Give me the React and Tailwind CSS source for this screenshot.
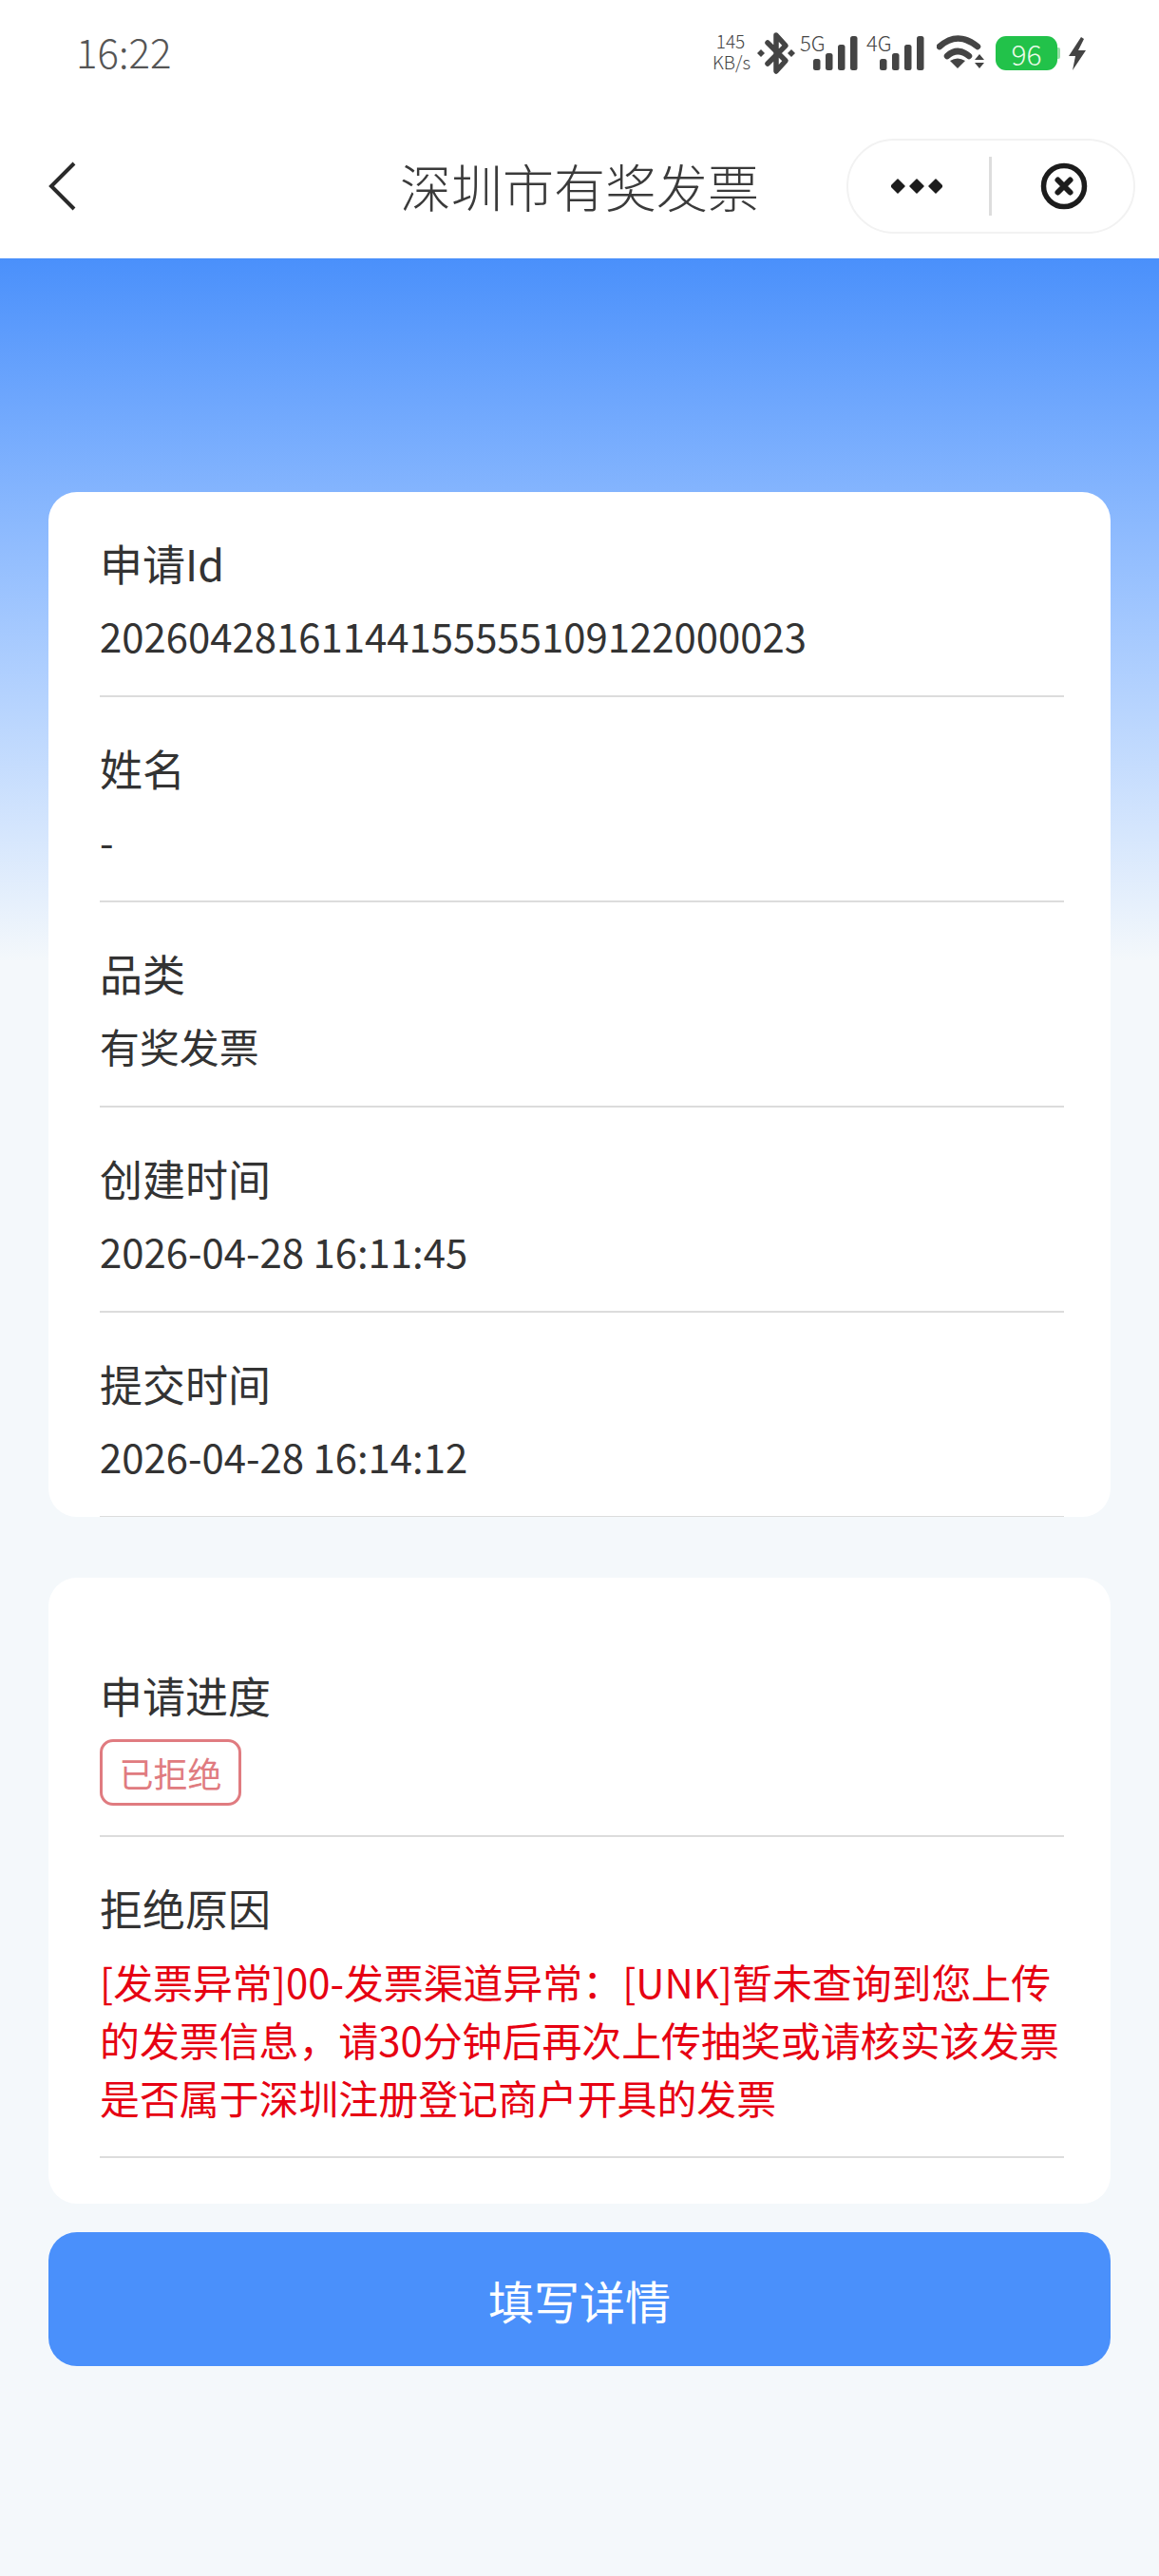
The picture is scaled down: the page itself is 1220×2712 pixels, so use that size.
import React from "react";

const font = { fontFamily: '"Noto Sans CJK SC", "Noto Sans", sans-serif' };

function Signal({ label }) {
  return (
    <div className="relative h-[38px] w-[47px]">
      <span className="absolute -left-[14px] -top-[2px] text-[22px] leading-[20px] font-light text-[#444]">{label}</span>
      <svg width="47" height="36" viewBox="0 0 47 36" className="absolute left-0 top-[2px]" fill="#444">
        <rect x="0" y="24" width="7.5" height="12" rx="2.5" />
        <rect x="13" y="18" width="7.5" height="18" rx="2.5" />
        <rect x="26" y="9" width="7.5" height="27" rx="2.5" />
        <rect x="39" y="0" width="7.5" height="36" rx="2.5" />
      </svg>
    </div>
  );
}

function Row({ label, children }) {
  return (
    <div className="border-b-2 border-[#dcdcdc] pt-[42px] pb-[30px]">
      <div className="text-[45px] leading-[66px] text-[#333]">{label}</div>
      {children}
    </div>
  );
}

function Value({ children }) {
  return <div className="mt-[10px] text-[41.9px] leading-[66px] text-[#333]">{children}</div>;
}

export default function App() {
  return (
    <div className="min-h-[2712px] w-[1220px] bg-white" style={font}>
      {/* status bar */}
      <div className="flex h-[130px] items-start justify-between pl-[80px] pr-[77px] pt-[31px]">
        <span className="-mt-[2px] text-[42px] leading-[50px] font-light text-[#555]">16:22</span>
        <div className="flex items-start pt-[5px]">
          <div className="-mt-[4px] w-[38px] text-center text-[19px] leading-[22px] font-light text-[#444]">
            <div>145</div>
            <div>KB/s</div>
          </div>
          <svg width="40" height="46" viewBox="0 0 40 46" className="-mt-[3px] ml-[9px]">
            <path d="M11 12 L30 31 L20 42 V4 L30 15 L11 34" fill="none" stroke="#444" strokeWidth="5.5" strokeLinecap="round" strokeLinejoin="round" />
            <path d="M4 19 L8 23 L4 27 L0 23 Z M36 19 L40 23 L36 27 L32 23 Z" fill="#444" />
          </svg>
          <div className="ml-[19px]"><Signal label="5G" /></div>
          <div className="ml-[23px]"><Signal label="4G" /></div>
          <svg width="50" height="37" viewBox="0 0 50 37" className="ml-[13px]">
            <path d="M3 13 Q22 -4 43 13" fill="none" stroke="#444" strokeWidth="6.5" strokeLinecap="round" />
            <path d="M11 23 Q22 13 34 23" fill="none" stroke="#444" strokeWidth="6.5" strokeLinecap="round" />
            <path d="M14 28 Q22 23 30 28 L22 36 Z" fill="#444" />
            <path d="M45 21 L50 27 H40 Z M45 36 L50 30 H40 Z" fill="#444" />
          </svg>
          <div className="ml-[12px] mt-[2px] flex items-center">
            <div className="flex h-[36px] w-[65px] items-center justify-center rounded-[11px] bg-[#22c24a] text-[30px] font-light text-[#eafbe9]">96</div>
            <div className="h-[12px] w-[3px] rounded-r-[2px] bg-[#9adfa8]" />
          </div>
          <svg width="18" height="35" viewBox="0 0 18 35" className="ml-[9px] mt-[3px]">
            <path d="M13 0 L0 20 H7 L4 35 L18 14 H10 L16 2 Z" fill="#444" />
          </svg>
        </div>
      </div>

      {/* nav bar */}
      <div className="relative flex h-[142px] items-center justify-center pb-[10px]">
        <svg width="32" height="52" viewBox="0 0 32 52" className="absolute left-[50px] top-[40px]">
          <path d="M28 2 L4 26 L28 50" fill="none" stroke="#2a2a2a" strokeWidth="4" />
        </svg>
        <span className="text-[54px] leading-[70px] font-light text-[#3a3a3a]">深圳市有奖发票</span>
        <div className="absolute left-[891px] top-[16px] flex h-[100px] w-[304px] items-center rounded-full border-2 border-[#f2f2f2]">
          <svg width="54" height="16" viewBox="0 0 54 16" className="ml-[45px]" fill="#1c1c1c">
            <path d="M7 1 L14 8 L7 15 L0 8 Z" strokeLinejoin="round" stroke="#1c1c1c" strokeWidth="1.5" />
            <path d="M27 1 L34 8 L27 15 L20 8 Z" strokeLinejoin="round" stroke="#1c1c1c" strokeWidth="1.5" />
            <path d="M47 1 L54 8 L47 15 L40 8 Z" strokeLinejoin="round" stroke="#1c1c1c" strokeWidth="1.5" />
          </svg>
          <div className="ml-[49px] h-[62px] w-[3px] bg-[#dddddd]" />
          <svg width="50" height="50" viewBox="0 0 50 50" className="ml-[51px]">
            <circle cx="25" cy="25" r="21.5" fill="none" stroke="#1c1c1c" strokeWidth="5.5" />
            <path d="M18.5 18.5 L31.5 31.5 M31.5 18.5 L18.5 31.5" stroke="#1c1c1c" strokeWidth="6" strokeLinecap="round" />
          </svg>
        </div>
      </div>

      {/* page body */}
      <div className="bg-[#f4f8fb] bg-linear-to-b from-[#4a90fb] to-[#f4f8fb] bg-[length:100%_740px] bg-no-repeat px-[51px] pb-[221px] pt-[246px]">
        <div className="h-[1079px] overflow-hidden rounded-[30px] bg-white pl-[54px] pr-[49px]">
          <Row label="申请Id"><Value>20260428161144155555109122000023</Value></Row>
          <Row label="姓名"><Value>-</Value></Row>
          <Row label="品类"><Value>有奖发票</Value></Row>
          <Row label="创建时间"><Value>2026-04-28 16:11:45</Value></Row>
          <Row label="提交时间"><Value>2026-04-28 16:14:12</Value></Row>
        </div>

        <div className="mt-[64px] rounded-[30px] bg-white pb-[48px] pl-[54px] pr-[49px] pt-[49px]">
          <div className="border-b-2 border-[#dcdcdc] pb-[31px] pt-[42px]">
            <div className="text-[45px] leading-[66px] text-[#333]">申请进度</div>
            <div className="mt-[13px] flex h-[70px] w-[149px] items-center justify-center rounded-[14px] border-[3px] border-[#e07b80] text-[36px] text-[#e07b80]">已拒绝</div>
          </div>
          <div className="border-b-2 border-[#dcdcdc] pb-[32px] pt-[42px]">
            <div className="text-[45px] leading-[66px] text-[#333]">拒绝原因</div>
            <div className="mt-[13px] text-[41.9px] leading-[61px] text-[#e60012]">
              [发票异常]00-发票渠道异常：[UNK]暂未查询到您上传的发票信息，请30分钟后再次上传抽奖或请核实该发票是否属于深圳注册登记商户开具的发票
            </div>
          </div>
        </div>

        <button type="button" className="mt-[30px] block h-[141px] w-full rounded-[30px] bg-[#4a90fb] text-[48px] text-white">填写详情</button>
      </div>
    </div>
  );
}
